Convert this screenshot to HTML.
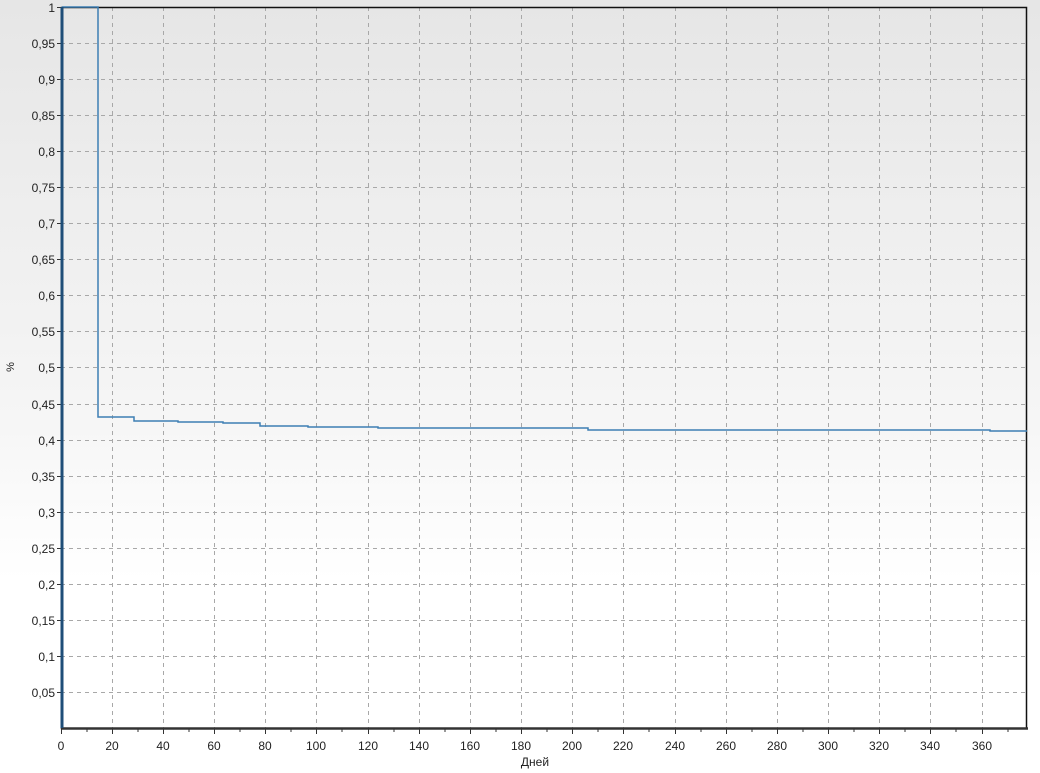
<!DOCTYPE html>
<html><head><meta charset="utf-8"><style>
html,body{margin:0;padding:0;width:1040px;height:773px;overflow:hidden;background:#fff}
text{font-family:"Liberation Sans",sans-serif;font-size:12px;fill:#222}
</style></head><body>
<svg width="1040" height="773" xmlns="http://www.w3.org/2000/svg">
<defs><linearGradient id="g" x1="0" y1="0" x2="0" y2="1">
<stop offset="0" stop-color="#e6e6e6"/><stop offset="0.55" stop-color="#f6f6f6"/><stop offset="0.75" stop-color="#fff"/><stop offset="1" stop-color="#fff"/></linearGradient></defs>
<rect x="0" y="0" width="1040" height="773" fill="url(#g)"/>
<g stroke="#a8a8a8" stroke-dasharray="4,4" stroke-width="1">
<path d="M112.5 7V728M163.5 7V728M214.5 7V728M265.5 7V728M316.5 7V728M368.5 7V728M419.5 7V728M470.5 7V728M521.5 7V728M572.5 7V728M623.5 7V728M675.5 7V728M726.5 7V728M777.5 7V728M828.5 7V728M879.5 7V728M930.5 7V728M982.5 7V728"/>
<path d="M61 43.5H1027M61 79.5H1027M61 115.5H1027M61 151.5H1027M61 187.5H1027M61 223.5H1027M61 259.5H1027M61 295.5H1027M61 331.5H1027M61 367.5H1027M61 404.5H1027M61 440.5H1027M61 476.5H1027M61 512.5H1027M61 548.5H1027M61 584.5H1027M61 620.5H1027M61 656.5H1027M61 692.5H1027"/>
</g>
<rect x="61.5" y="7.5" width="965" height="721" fill="none" stroke="#111" stroke-width="1.5"/>
<line x1="61" y1="728.5" x2="1028" y2="728.5" stroke="#333" stroke-width="2.5"/>
<g stroke="#333" stroke-width="1">
<path d="M61.5 729V734M87 729V732M112.5 729V734M138 729V732M163.5 729V734M189 729V732M214.5 729V734M240 729V732M265.5 729V734M291 729V732M316.5 729V734M342 729V732M368.5 729V734M394 729V732M419.5 729V734M445 729V732M470.5 729V734M496 729V732M521.5 729V734M547 729V732M572.5 729V734M598 729V732M623.5 729V734M649 729V732M675.5 729V734M701 729V732M726.5 729V734M752 729V732M777.5 729V734M803 729V732M828.5 729V734M854 729V732M879.5 729V734M905 729V732M930.5 729V734M956 729V732M982.5 729V734M1008 729V732"/>
<path d="M57 7.5H61M57 43.5H61M57 79.5H61M57 115.5H61M57 151.5H61M57 187.5H61M57 223.5H61M57 259.5H61M57 295.5H61M57 331.5H61M57 367.5H61M57 404.5H61M57 440.5H61M57 476.5H61M57 512.5H61M57 548.5H61M57 584.5H61M57 620.5H61M57 656.5H61M57 692.5H61"/>
</g>
<polyline fill="none" stroke="#3d7fb4" stroke-width="1.5" points="62,7 98,7 98,417 134,417 134,421 178,421 178,422 223,422 223,423 260,423 260,426 308,426 308,427 378,427 378,428 588,428 588,430 990,430 990,431 1027,431"/>
<line x1="62" y1="7" x2="62" y2="728" stroke="#1f4e78" stroke-width="3"/>
<g text-anchor="end">
<text x="55" y="12">1</text><text x="55" y="48">0,95</text><text x="55" y="84">0,9</text><text x="55" y="120">0,85</text><text x="55" y="156">0,8</text><text x="55" y="192">0,75</text><text x="55" y="228">0,7</text><text x="55" y="264">0,65</text><text x="55" y="300">0,6</text><text x="55" y="336">0,55</text><text x="55" y="372">0,5</text><text x="55" y="409">0,45</text><text x="55" y="445">0,4</text><text x="55" y="481">0,35</text><text x="55" y="517">0,3</text><text x="55" y="553">0,25</text><text x="55" y="589">0,2</text><text x="55" y="625">0,15</text><text x="55" y="661">0,1</text><text x="55" y="697">0,05</text>
</g>
<g text-anchor="middle">
<text x="61" y="750">0</text><text x="112" y="750">20</text><text x="163" y="750">40</text><text x="214" y="750">60</text><text x="265" y="750">80</text><text x="316" y="750">100</text><text x="368" y="750">120</text><text x="419" y="750">140</text><text x="470" y="750">160</text><text x="521" y="750">180</text><text x="572" y="750">200</text><text x="623" y="750">220</text><text x="675" y="750">240</text><text x="726" y="750">260</text><text x="777" y="750">280</text><text x="828" y="750">300</text><text x="879" y="750">320</text><text x="930" y="750">340</text><text x="982" y="750">360</text>
<text x="535" y="766">Дней</text>
</g>
<text x="14" y="367" text-anchor="middle" transform="rotate(-90 14 367)" style="font-size:11px">%</text>
</svg>
</body></html>
